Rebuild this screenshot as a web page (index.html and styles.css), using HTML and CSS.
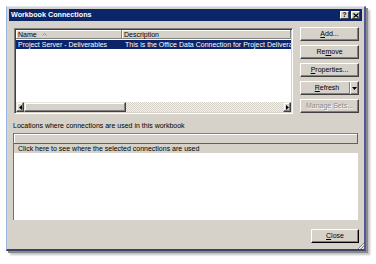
FILE: index.html
```html
<!DOCTYPE html>
<html>
<head>
<meta charset="utf-8">
<link rel="stylesheet" href="styles.css">
</head>
<body>
<div class="dialog">
  <div class="titlebar">
    <span class="title">Workbook Connections</span>
    <span class="tb-btns">
      <span class="tb-btn">?</span>
      <span class="tb-btn"><svg width="6" height="5" viewBox="0 0 6 5"><path d="M0.5 0.5 L5.5 4.5 M5.5 0.5 L0.5 4.5" stroke="#000" stroke-width="1.2"/></svg></span>
    </span>
  </div>
  <div class="content">
    <div class="toprow">
      <div class="listview">
        <div class="lv-header">
          <div class="col col-name">Name <svg class="sort" width="5" height="3" viewBox="0 0 5 3"><path d="M0.5 2.5 L2.5 0.5 L4.5 2.5" fill="none" stroke="#808080" stroke-width="0.8"/></svg></div>
          <div class="col col-desc">Description</div>
        </div>
        <div class="lv-row selected">
          <div class="cell cell-name">Project Server - Deliverables</div>
          <div class="cell cell-desc">This is the Office Data Connection for Project Deliverables</div>
        </div>
        <div class="lv-fill"></div>
        <div class="hscroll">
          <div class="sb-btn"><svg width="3" height="5" viewBox="0 0 3 5"><path d="M3 0 L0 2.5 L3 5 Z" fill="#000"/></svg></div>
          <div class="sb-thumb"></div>
          <div class="sb-track"></div>
          <div class="sb-btn"><svg width="3" height="5" viewBox="0 0 3 5"><path d="M0 0 L3 2.5 L0 5 Z" fill="#000"/></svg></div>
        </div>
      </div>
      <div class="buttons">
        <div class="btn"><u>A</u>dd...</div>
        <div class="btn">Re<u>m</u>ove</div>
        <div class="btn"><u>P</u>roperties...</div>
        <div class="btn split"><span class="split-main"><u>R</u>efresh</span><span class="split-arrow"><svg width="5" height="3" viewBox="0 0 5 3"><path d="M0 0 L5 0 L2.5 3 Z" fill="#000"/></svg></span></div>
        <div class="btn disabled">Manage Sets...</div>
      </div>
    </div>
    <div class="label">Locations where connections are used in this workbook</div>
    <div class="panel">
      <div class="panel-header"></div>
      <div class="panel-row">Click here to see where the selected connections are used</div>
      <div class="panel-white"></div>
    </div>
    <div class="footer">
      <div class="btn close"><u>C</u>lose</div>
    </div>
  </div>
  <svg class="grip" width="6" height="6" viewBox="0 0 6 6"><path d="M6 0 L0 6 M6 3 L3 6" stroke="#808080" stroke-width="1"/><path d="M6 1 L1 6 M6 4 L4 6" stroke="#fff" stroke-width="0.8"/></svg>
</div>
</body>
</html>
```

FILE: styles.css
```css
html, body {
  margin: 0;
  padding: 0;
  background: #ffffff;
}
body {
  width: 376px;
  height: 264px;
  overflow: hidden;
  font-family: "Liberation Sans", Arial, sans-serif;
  font-size: 7px;
  color: #000;
}
.dialog {
  position: relative;
  margin: 6px 0 0 6px;
  width: 360px;
  height: 245px;
  box-sizing: border-box;
  background: #d6d2ca;
  border-left: 1px solid #9cb6e2;
  border-top: 1px solid #e4e6f0;
  border-right: 2px solid #50589a;
  border-bottom: 2px solid #3a4268;
  box-shadow: 2px 2px 0 #8a8a8a, 4px 4px 2px rgba(0,0,0,0.25);
  display: flex;
  flex-direction: column;
}
.titlebar {
  margin: 2px 2px 0 2px;
  height: 12px;
  background: #0c2468;
  display: flex;
  align-items: center;
  padding-left: 2px;
}
.title {
  color: #fff;
  font-weight: bold;
  font-size: 7.2px;
  line-height: 12px;
  flex: 1;
}
.tb-btns {
  display: flex;
  margin-right: 2px;
}
.tb-btn {
  width: 9px;
  height: 8px;
  box-sizing: border-box;
  background: #d6d2ca;
  border-top: 1px solid #fff;
  border-left: 1px solid #fff;
  border-right: 1px solid #404040;
  border-bottom: 1px solid #404040;
  display: flex;
  align-items: center;
  justify-content: center;
  font-weight: bold;
  font-size: 6.5px;
  line-height: 6px;
  margin-left: 2px;
}
.content {
  flex: 1;
  padding: 6px 5px 6px 6px;
  display: flex;
  flex-direction: column;
}
.toprow {
  height: 87px;
  display: flex;
}
.listview {
  margin: 1px 0 0 1px;
  width: 279px;
  height: 86px;
  box-sizing: border-box;
  background: #fff;
  border-top: 1px solid #808080;
  border-left: 1px solid #808080;
  border-right: 1px solid #fff;
  border-bottom: 1px solid #fff;
  box-shadow: inset 1px 1px 0 #404040, inset -1px -1px 0 #d6d2ca;
  padding: 1px;
  display: flex;
  flex-direction: column;
}
.lv-header {
  height: 9px;
  display: flex;
  background: #d6d2ca;
}
.col {
  box-sizing: border-box;
  height: 9px;
  line-height: 9px;
  padding-left: 2px;
  border-right: 1px solid #808080;
  border-bottom: 1px solid #808080;
  box-shadow: inset 1px 1px 0 #fff;
  white-space: nowrap;
}
.col-name {
  width: 106px;
  display: flex;
  align-items: center;
}
.sort {
  margin-left: 5px;
}
.col-desc {
  flex: 1;
}
.lv-row {
  height: 9px;
  display: flex;
  margin-top: 1px;
  line-height: 9px;
  white-space: nowrap;
  overflow: hidden;
}
.lv-row.selected {
  background: #0c2468;
  color: #fff;
}
.cell {
  overflow: hidden;
  padding-left: 2px;
  box-sizing: border-box;
}
.cell-name {
  width: 106px;
  flex: none;
}
.cell-desc {
  flex: 1;
  padding-left: 3px;
}
.lv-fill {
  flex: 1;
}
.hscroll {
  height: 10px;
  display: flex;
}
.sb-btn {
  width: 8px;
  height: 10px;
  box-sizing: border-box;
  background: #d6d2ca;
  border-top: 1px solid #e8e6e0;
  border-left: 1px solid #e8e6e0;
  border-right: 1px solid #404040;
  border-bottom: 1px solid #404040;
  box-shadow: inset -1px -1px 0 #808080, inset 1px 1px 0 #fff;
  display: flex;
  align-items: center;
  justify-content: center;
}
.sb-thumb {
  width: 102px;
  height: 10px;
  box-sizing: border-box;
  background: #d6d2ca;
  border-top: 1px solid #e8e6e0;
  border-left: 1px solid #e8e6e0;
  border-right: 1px solid #404040;
  border-bottom: 1px solid #404040;
  box-shadow: inset -1px -1px 0 #808080, inset 1px 1px 0 #fff;
}
.sb-track {
  flex: 1;
  background-color: #d6d2ca;
  background-image: repeating-conic-gradient(#f4f2ee 0 25%, #d6d2ca 0 50%);
  background-size: 2px 2px;
}
.buttons {
  margin-left: auto;
  width: 59px;
  display: flex;
  flex-direction: column;
  gap: 4px;
}
.btn {
  height: 14px;
  box-sizing: border-box;
  background: #d6d2ca;
  border-top: 1px solid #fff;
  border-left: 1px solid #fff;
  border-right: 1px solid #404040;
  border-bottom: 1px solid #404040;
  box-shadow: inset -1px -1px 0 #808080;
  display: flex;
  align-items: center;
  justify-content: center;
  line-height: 12px;
  white-space: nowrap;
}
.btn u {
  text-underline-offset: 1px;
}
.split {
  justify-content: flex-start;
}
.split-main {
  flex: 1;
  text-align: center;
  padding-left: 4px;
}
.split-arrow {
  width: 9px;
  height: 12px;
  box-sizing: border-box;
  border-left: 1px solid #808080;
  box-shadow: inset 1px 0 0 #fff;
  display: flex;
  align-items: center;
  justify-content: center;
}
.disabled {
  color: #8a8a8a;
  text-shadow: 1px 1px 0 #fff;
}
.label {
  margin-top: 7px;
  height: 9px;
  line-height: 9px;
  white-space: nowrap;
}
.panel {
  margin-top: 3px;
  height: 87px;
  margin-right: 1px;
  box-sizing: border-box;
  border-left: 1px solid #707070;
  display: flex;
  flex-direction: column;
}
.panel-header {
  height: 11px;
  box-sizing: border-box;
  border-top: 1px solid #808080;
  border-right: 1px solid #606060;
  border-bottom: 1px solid #606060;
  box-shadow: inset 1px 1px 0 #fff;
}
.panel-row {
  height: 9px;
  line-height: 9px;
  padding-left: 4px;
  white-space: nowrap;
}
.panel-white {
  flex: 1;
  background: #fff;
}
.footer {
  margin-top: 9px;
  display: flex;
  justify-content: flex-end;
}
.close {
  width: 48px;
  border-right: 1px solid #000;
  border-bottom: 1px solid #000;
}
.grip {
  position: absolute;
  right: 0;
  bottom: 0;
}
```
